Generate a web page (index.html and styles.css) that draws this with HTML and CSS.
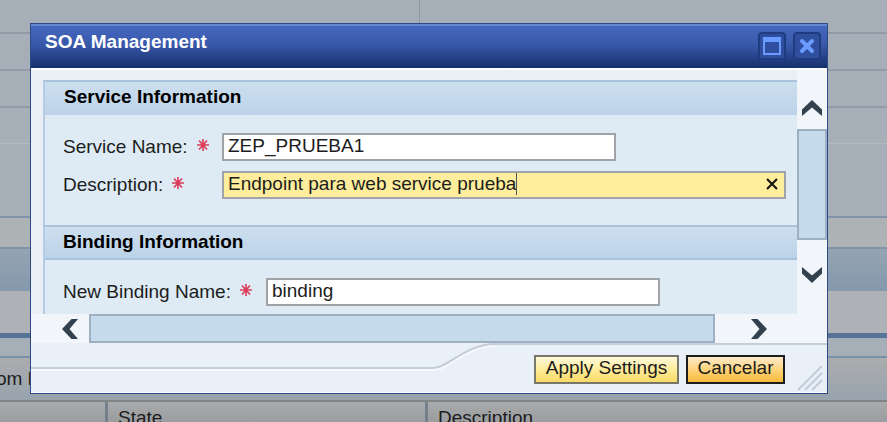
FILE: index.html
```html
<!DOCTYPE html>
<html lang="es">
<head>
    <meta charset="UTF-8">
    <meta name="viewport" content="width=device-width, initial-scale=1.0">
    <title>SOA Management</title>
    <link rel="stylesheet" href="styles.css">
</head>
<body>
    <svg class="sprite" aria-hidden="true">
        <symbol id="star" viewBox="0 0 12 12">
            <path d="M6 0v12M0 6h12M2 1.500l8 9M10 1.500l-8 9" fill="none" stroke="#dc3a58" stroke-width="1.600"/>
        </symbol>
    </svg>

    <!-- page behind the dialog -->
    <div class="page">
        <div class="split">
            <div class="line first"></div>
            <div class="line"></div>
            <div class="line"></div>
            <div class="line light"></div>
        </div>
        <div class="gap"></div>
        <div class="strip"></div>
        <div class="band"></div>
        <div class="blank"></div>
        <div class="spacer"></div>
        <div class="toolbar"><span>om l</span></div>
        <div class="columns">
            <div class="col"></div>
            <div class="col state">State</div>
            <div class="col desc">Description</div>
        </div>
    </div>

    <div class="dialog" role="dialog" aria-labelledby="title">
        <div class="titlebar">
            <h1 id="title">SOA Management</h1>
            <button class="win-btn" aria-label="Maximize">
                <svg width="18" height="18" viewBox="0 0 18 18"><path d="M1 1h16v16H1z" fill="none" stroke="#6b9bff" stroke-width="2"/><path d="M1 1h16v4H1z" fill="#6b9bff"/></svg>
            </button>
            <button class="win-btn" aria-label="Close">
                <svg width="18" height="18" viewBox="0 0 18 18"><path d="M4 4l10 10M14 4L4 14" fill="none" stroke="#6b9bff" stroke-width="4" stroke-linecap="round"/></svg>
            </button>
        </div>

        <div class="body">
            <div class="view">
                <div class="group">
                    <h2>Service Information</h2>
                    <div class="row">
                        <label for="name">Service Name:</label>
                        <svg class="star"><use href="#star"/></svg>
                        <input class="field" type="text" id="name" value="ZEP_PRUEBA1">
                    </div>
                    <div class="row">
                        <label for="description">Description:</label>
                        <svg class="star"><use href="#star"/></svg>
                        <div class="field active">
                            <input type="text" id="description" value="Endpoint para web service prueba">
                            <span class="caret"></span>
                            <button class="clear" aria-label="Clear">
                                <svg width="12" height="12" viewBox="0 0 12 12"><path d="M1 1l10 10M11 1L1 11" fill="none" stroke="#111" stroke-width="2"/></svg>
                            </button>
                        </div>
                    </div>
                </div>
                <div class="group binding">
                    <h2>Binding Information</h2>
                    <div class="row">
                        <label for="binding">New Binding Name:</label>
                        <svg class="star"><use href="#star"/></svg>
                        <input class="field" type="text" id="binding" value="binding">
                    </div>
                </div>
            </div>
            <div class="vscroll">
                <button class="up" aria-label="Scroll up">
                    <svg width="20" height="16" viewBox="0 0 20 16"><path d="M0 9.500L10 0l10 9.500V16L10 7.500 0 16z" fill="#33414f"/></svg>
                </button>
                <div class="thumb"></div>
                <button class="down" aria-label="Scroll down">
                    <svg width="20" height="16" viewBox="0 0 20 16"><path d="M0 6.500L10 16 20 6.500V0L10 8.500 0 0z" fill="#33414f"/></svg>
                </button>
            </div>
        </div>

        <div class="hscroll">
            <button class="left" aria-label="Scroll left">
                <svg width="16" height="20" viewBox="0 0 16 20"><path d="M9.500 0L0 10l9.500 10H16L7.500 10 16 0z" fill="#33414f"/></svg>
            </button>
            <div class="thumb"></div>
            <button class="right" aria-label="Scroll right">
                <svg width="16" height="20" viewBox="0 0 16 20"><path d="M6.500 0L16 10 6.500 20H0l8.500-10L0 0z" fill="#33414f"/></svg>
            </button>
        </div>

        <div class="footer">
            <div class="edge"></div>
            <svg class="curve" width="62" height="28" viewBox="0 0 62 28"><path d="M0 27c15 0 33-24 62-24" fill="none" stroke="#f7fafd" stroke-width="2"/><path d="M0 25c15 0 33-24 62-24" fill="none" stroke="#c3cedb" stroke-width="2"/></svg>
            <div class="actions">
                <button class="btn">Apply Settings</button>
                <button class="btn cancel">Cancelar</button>
                <svg class="grip" width="26" height="26" viewBox="0 0 26 26"><path d="M1 25L25 1M8 25L25 8M15 25l10-10" fill="none" stroke="#c0cddb" stroke-width="2"/></svg>
            </div>
        </div>
    </div>
</body>
</html>
```

FILE: styles.css
```css
* {
    margin: 0;
    padding: 0;
    box-sizing: border-box;
}

body {
    font-family: "Liberation Sans", Arial, sans-serif;
    font-size: 19px;
    color: #1c1c1c;
    background: #a6aeb8;
    height: 100vh;
    overflow: hidden;
    position: relative;
}

button, input {
    font: inherit;
    color: inherit;
    background: none;
    border: none;
    outline: none;
}

button {
    display: flex;
    align-items: center;
    justify-content: center;
    cursor: pointer;
}

.sprite {
    position: absolute;
    width: 0;
    height: 0;
}

/* page behind */
.split {
    background: linear-gradient(#8f97a1, #8f97a1) 419px 0 / 1px 100% no-repeat;
}

.line {
    height: 37px;
    border-bottom: 2px solid #929aa5;
}

.line.first {
    height: 34px;
}

.line.light {
    height: 36px;
    border-bottom: 1px solid #b7b9bb;
}

.gap {
    height: 74px;
    border-bottom: 2px solid #8093aa;
}

.strip {
    height: 31px;
    background: #adb2b5;
    border-bottom: 2px solid #8093aa;
}

.band {
    height: 42px;
    background: linear-gradient(#95a4b1, #8498ad);
}

.blank {
    height: 47px;
    background: #aeb2b6;
    border-bottom: 5px solid #577498;
}

.spacer {
    height: 20px;
    border-bottom: 2px solid #7990ab;
}

.toolbar {
    height: 44px;
    padding: 10px 0;
    background: linear-gradient(#abacad, #98a3ae);
    border-bottom: 2px solid #828486;
}

.toolbar span {
    margin-left: -4px;
}

.columns {
    display: flex;
    height: 32px;
    background: linear-gradient(#a8aaac, #929597);
}

.col {
    width: 105px;
    padding: 5px 10px;
}

.col.state {
    width: 320px;
    border-left: 3px solid #74808e;
}

.col.desc {
    flex: 1;
    border-left: 3px solid #74808e;
}

/* dialog */
.dialog {
    position: absolute;
    top: 23px;
    left: 30px;
    right: 59px;
    background: #e9f0f7;
    border: 1px solid #2c4a86;
}

.titlebar {
    display: flex;
    align-items: center;
    gap: 7px;
    height: 44px;
    padding: 0 6px 0 14px;
    background: linear-gradient(#4568bf, #3858a9 45%, #15306c);
    border-top: 2px solid #6288d3;
}

.titlebar h1 {
    flex: 1;
    font-size: 19px;
    line-height: 22px;
    padding-bottom: 10px;
    color: #fff;
}

.win-btn {
    width: 28px;
    height: 28px;
    margin-bottom: 2px;
    background: #2f4f9e;
    border: 2px solid #203c80;
    border-radius: 4px;
}

.body {
    display: flex;
    height: 246px;
    border-top: 2px solid #fff;
}

.view {
    flex: 1;
    padding: 10px 0 0 12px;
    background: #e9eff4;
    overflow: hidden;
}

.group {
    padding-bottom: 24px;
    background: #deebf5;
    border-top: 2px solid #a9c3dc;
    border-left: 2px solid #b5cce4;
}

.group h2 {
    height: 33px;
    margin-bottom: 18px;
    padding-left: 19px;
    font-size: 19px;
    line-height: 30px;
    color: #000;
    background: linear-gradient(#cddfef, #bbd2e8);
}

.group.binding h2 {
    padding-left: 18px;
    border-bottom: 2px solid #a9c3dc;
}

.row {
    display: flex;
    align-items: center;
    height: 28px;
    margin-bottom: 10px;
    padding-left: 18px;
}

.group .row:last-child {
    margin-bottom: 2px;
}

.star {
    width: 12px;
    height: 12px;
    margin: 0 auto 4px 9px;
}

.field {
    width: 394px;
    height: 28px;
    padding: 0 4px 2px;
    background: #fff;
    border: 2px solid #a0a4a8;
    margin-right: 181px;
}

.binding .field {
    margin-right: 137px;
}

.field.active {
    display: flex;
    align-items: center;
    width: 564px;
    padding-right: 5px;
    margin-right: 11px;
    background: #feed9c;
}

.active input {
    field-sizing: content;
}

.caret {
    width: 1px;
    height: 22px;
    background: #555;
}

.clear {
    width: 14px;
    height: 22px;
    margin-left: auto;
}

/* scroll bars */
.vscroll {
    display: flex;
    flex-direction: column;
    width: 30px;
    background: #f2f6fa;
}

.up {
    height: 59px;
    padding-top: 16px;
}

.down {
    height: 74px;
    padding-bottom: 4px;
}

.thumb {
    background: #c5daea;
    border: 2px solid #9db1c2;
}

.vscroll .thumb {
    flex: 1;
}

.hscroll {
    display: flex;
    height: 29px;
    background: #f2f6fa;
}

.hscroll .thumb {
    flex: 1;
}

.left {
    width: 58px;
    padding-left: 20px;
}

.right {
    width: 112px;
    padding-right: 24px;
}

.footer {
    display: flex;
    height: 50px;
    border-bottom: 1px solid #fff;
}

.edge {
    flex: 1;
    height: 28px;
    border-bottom: 2px solid #f7fafd;
    box-shadow: inset 0 -2px #c3cedb;
}

.actions {
    display: flex;
    align-items: flex-start;
    gap: 7px;
    width: 332px;
    padding: 10px 4px 0 39px;
    border-top: 2px solid #c3cedb;
}

.btn {
    width: 145px;
    height: 29px;
    padding-bottom: 4px;
    background: linear-gradient(#fffadb, #fee88e 60%, #f6d965);
    border: 2px solid #77776c;
}

.btn.cancel {
    width: 99px;
    background: linear-gradient(#fdeacb, #fdcf6c 60%, #f6b93c);
    border-color: #1c1c1c;
}

.grip {
    margin: 10px 0 0 auto;
}
```
